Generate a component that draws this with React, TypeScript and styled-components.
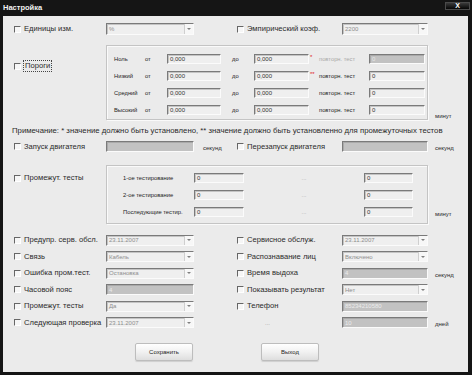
import React from "react";
import styled, { createGlobalStyle } from "styled-components";

const GlobalStyle = createGlobalStyle`
  html, body {
    margin: 0;
    padding: 0;
    background: #141414;
  }
  body {
    font-family: "Liberation Sans", Arial, sans-serif;
  }
`;

const COLS = "92px 88px 43px 105px 86px 1fr";

const Window = styled.div`
  width: 472px;
  height: 375px;
  box-sizing: border-box;
  background: #151515;
  padding: 0 4px 3px 3px;
  display: flex;
  flex-direction: column;
`;

const TitleBar = styled.div`
  height: 16px;
  flex: none;
  display: flex;
  align-items: flex-start;
  justify-content: space-between;
`;

const Title = styled.span`
  color: #f2f2f2;
  font-size: 7.5px;
  font-weight: bold;
  line-height: 16px;
`;

const CloseButton = styled.div`
  width: 25px;
  height: 8px;
  margin: 2px -2px 0 0;
  box-sizing: border-box;
  background: linear-gradient(#3a3a3a, #050505);
  border: 1px solid #4a4a4a;
  color: #fff;
  font-size: 7px;
  font-weight: bold;
  line-height: 6px;
  text-align: center;
`;

const Body = styled.div`
  flex: 1;
  background: #ebebeb;
  padding: 7px 0 0 11px;
  display: flex;
  flex-direction: column;
  font-size: 7.6px;
  line-height: 10px;
  color: #2a2a2a;
`;

const Row = styled.div<{ $h: number; $mt?: number }>`
  display: grid;
  grid-template-columns: ${COLS};
  grid-template-rows: ${(p) => p.$h}px;
  align-items: center;
  height: ${(p) => p.$h}px;
  margin-top: ${(p) => p.$mt ?? 0}px;
`;

const CheckLabel = styled.div<{ $top?: number }>`
  display: flex;
  align-items: center;
  gap: 3px;
  white-space: nowrap;
  align-self: ${(p) => (p.$top != null ? "start" : "center")};
  margin-top: ${(p) => p.$top ?? 0}px;
`;

const Box = styled.span`
  width: 7px;
  height: 7px;
  flex: none;
  box-sizing: border-box;
  background: #f6f6f6;
  border-style: solid;
  border-width: 1px;
  border-color: #666 #fff #fff #666;
`;

const Focused = styled.span`
  outline: 1px dotted #444;
  outline-offset: 0;
  padding: 0 1px;
`;

const Field = styled.div<{ $off?: boolean; $h?: number; $ink?: string }>`
  box-sizing: border-box;
  height: ${(p) => p.$h ?? 11}px;
  width: 100%;
  background: ${(p) => (p.$off ? "#c2c2c2" : "#efefef")};
  border-style: solid;
  border-width: 1px;
  border-color: #7a7a7a #fbfbfb #fbfbfb #7a7a7a;
  box-shadow: inset 1px 1px 0 ${(p) => (p.$off ? "#a9a9a9" : "#c4c4c4")};
  display: flex;
  align-items: center;
  padding-left: 2px;
  font-size: 6px;
  line-height: 8px;
  color: ${(p) => p.$ink ?? (p.$off ? "#ececec" : "#8e8e8e")};
  overflow: hidden;
  white-space: nowrap;
`;

const Arrow = styled.span`
  margin-left: auto;
  width: 9px;
  height: 100%;
  flex: none;
  box-sizing: border-box;
  background: #f7f7f7;
  border-left: 1px solid #cfcfcf;
  display: flex;
  align-items: center;
  justify-content: center;
  &::after {
    content: "";
    border-left: 2px solid transparent;
    border-right: 2px solid transparent;
    border-top: 2px solid #808080;
  }
`;

const Unit = styled.span<{ $pl?: number }>`
  font-size: 6px;
  line-height: 8px;
  padding-left: ${(p) => p.$pl ?? 7}px;
  margin-top: 3px;
  white-space: nowrap;
`;

const GroupUnit = styled.div<{ $pb: number }>`
  align-self: stretch;
  display: flex;
  flex-direction: column;
  justify-content: flex-end;
  padding: 0 0 ${(p) => p.$pb}px 7px;
  font-size: 6px;
  line-height: 8px;
  white-space: nowrap;
`;

const GroupBox = styled.div<{ $cols: string; $pad: string }>`
  grid-column: 2 / 6;
  align-self: stretch;
  box-sizing: border-box;
  border: 1px solid #c4c4c4;
  box-shadow: inset 1px 1px 0 #fafafa, 1px 1px 0 #fafafa;
  padding: ${(p) => p.$pad};
  display: grid;
  grid-template-columns: ${(p) => p.$cols};
  grid-auto-rows: 10px;
  row-gap: 7px;
  align-content: start;
  align-items: center;
`;

const Small = styled.span<{ $pl?: number; $muted?: boolean; $center?: boolean }>`
  font-size: 5.8px;
  line-height: 8px;
  white-space: nowrap;
  padding-left: ${(p) => p.$pl ?? 0}px;
  color: ${(p) => (p.$muted ? "#a9a9a9" : "#1c1c1c")};
  text-align: ${(p) => (p.$center ? "center" : "left")};
`;

const Mark = styled.span`
  color: #e02020;
  font-size: 6px;
  line-height: 6px;
  align-self: start;
  padding-left: 1px;
`;

const Note = styled.div`
  margin: 6px 0 0 -2px;
  height: 10px;
  font-size: 7.75px;
  white-space: nowrap;
`;

const List = styled.div`
  margin-top: 8px;
  display: flex;
  flex-direction: column;
`;

const Dots = styled.span`
  color: #9a9a9a;
  font-size: 6px;
  padding-left: 28px;
`;

const Buttons = styled.div`
  margin: 12px 0 0 121px;
  display: flex;
  gap: 68px;
`;

const Button = styled.button`
  width: 58px;
  height: 18px;
  padding: 0;
  font-family: "Liberation Sans", Arial, sans-serif;
  font-size: 6px;
  color: #222;
  background: linear-gradient(#ffffff, #f1f1f1 50%, #dedede);
  border: 1px solid #bdbdbd;
  border-radius: 2px;
  box-shadow: 0 1px 1px #cfcfcf;
`;

type Ctl = { kind: "select" | "off" | "input"; value: string };

const Control = ({ c }: { c: Ctl }) =>
  c.kind === "select" ? (
    <Field>
      {c.value}
      <Arrow />
    </Field>
  ) : (
    <Field $off={c.kind === "off"}>{c.value}</Field>
  );

const Check = ({ label, top, focused }: { label: string; top?: number; focused?: boolean }) => (
  <CheckLabel $top={top}>
    <Box />
    {focused ? <Focused>{label}</Focused> : label}
  </CheckLabel>
);

const thresholds = [
  { name: "Ноль", mark: "*", first: true },
  { name: "Низкий", mark: "**" },
  { name: "Средний" },
  { name: "Высокий" },
];

const tests = ["1-ое тестирование", "2-ое тестирование", "Последующие тестир."];

const bottom: { left: string; lc: Ctl; right: string | null; rc: Ctl; unit?: string }[] = [
  {
    left: "Предупр. серв. обсл.",
    lc: { kind: "select", value: "23.11.2007" },
    right: "Сервисное обслуж.",
    rc: { kind: "select", value: "23.11.2007" },
  },
  {
    left: "Связь",
    lc: { kind: "select", value: "Кабель" },
    right: "Распознавание лиц",
    rc: { kind: "select", value: "Включено" },
  },
  {
    left: "Ошибка пром.тест.",
    lc: { kind: "select", value: "Остановка" },
    right: "Время выдоха",
    rc: { kind: "off", value: "4" },
    unit: "секунд",
  },
  {
    left: "Часовой пояс",
    lc: { kind: "off", value: "4" },
    right: "Показывать результат",
    rc: { kind: "select", value: "Нет" },
  },
  {
    left: "Промежут. тесты",
    lc: { kind: "select", value: "Да" },
    right: "Телефон",
    rc: { kind: "off", value: "85234210580" },
  },
  {
    left: "Следующая проверка",
    lc: { kind: "select", value: "23.11.2007" },
    right: null,
    rc: { kind: "off", value: "10" },
    unit: "дней",
  },
];

export default function App() {
  return (
    <>
      <GlobalStyle />
      <Window>
        <TitleBar>
          <Title>Настройка</Title>
          <CloseButton>X</CloseButton>
        </TitleBar>
        <Body>
          <Row $h={12}>
            <Check label="Единицы изм." />
            <Field $h={12}>
              %
              <Arrow />
            </Field>
            <span />
            <Check label="Эмпирический коэф." />
            <Field $h={12}>
              2200
              <Arrow />
            </Field>
          </Row>

          <Row $h={75} $mt={10}>
            <Check label="Пороги" top={16} focused />
            <GroupBox $cols="31px 22px 54px 33px 55px 10px 50px 56px" $pad="8px 0 0 7px">
              {thresholds.map((t) => (
                <React.Fragment key={t.name}>
                  <Small>{t.name}</Small>
                  <Small>от</Small>
                  <Field $h={10} $ink="#333">0,000</Field>
                  <Small $pl={11}>до</Small>
                  <Field $h={10} $ink="#333">0,000</Field>
                  <Mark>{t.mark ?? ""}</Mark>
                  <Small $muted={t.first}>повторн. тест</Small>
                  <Field $h={10} $off={t.first} $ink={t.first ? "#e6e6e6" : "#333"}>
                    0
                  </Field>
                </React.Fragment>
              ))}
            </GroupBox>
            <GroupUnit $pb={0}>минут</GroupUnit>
          </Row>

          <Note>
            Примечание: * значение должно быть установлено, ** значение должно быть установленно
            для промежуточных тестов
          </Note>

          <Row $h={11} $mt={5}>
            <Check label="Запуск двигателя" />
            <Field $off />
            <Unit $pl={9}>секунд</Unit>
            <Check label="Перезапуск двигателя" />
            <Field $off />
            <Unit>секунд</Unit>
          </Row>

          <Row $h={59} $mt={13}>
            <Check label="Промежут. тесты" top={8} />
            <GroupBox $cols="71px 50px 120px 49px" $pad="7px 0 0 16px">
              {tests.map((t) => (
                <React.Fragment key={t}>
                  <Small>{t}</Small>
                  <Field $h={10} $ink="#333">0</Field>
                  <Small $muted $center>
                    ...
                  </Small>
                  <Field $h={10} $ink="#333">0</Field>
                </React.Fragment>
              ))}
            </GroupBox>
            <GroupUnit $pb={6}>минут</GroupUnit>
          </Row>

          <List>
            {bottom.map((r) => (
              <Row $h={16.5} key={r.left}>
                <Check label={r.left} />
                <Control c={r.lc} />
                <span />
                {r.right ? <Check label={r.right} /> : <Dots>...</Dots>}
                <Control c={r.rc} />
                {r.unit ? <Unit>{r.unit}</Unit> : <span />}
              </Row>
            ))}
          </List>

          <Buttons>
            <Button>Сохранить</Button>
            <Button>Выход</Button>
          </Buttons>
        </Body>
      </Window>
    </>
  );
}
